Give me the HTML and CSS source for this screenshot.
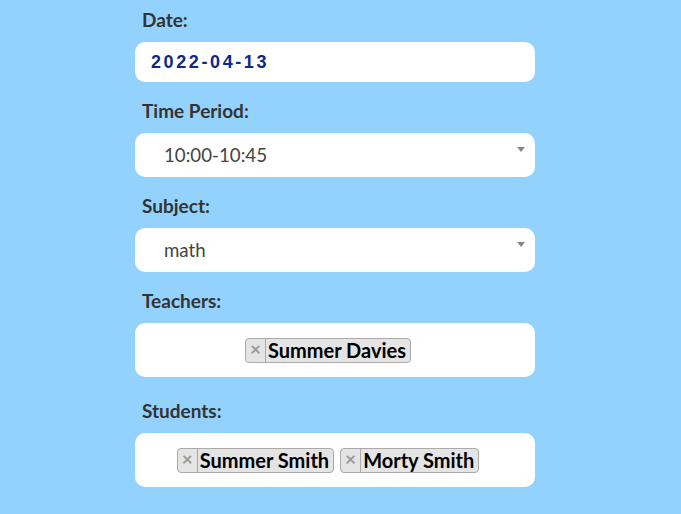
FILE: index.html
```html
<!DOCTYPE html>
<html>
<head>
<meta charset="utf-8">
<link rel="stylesheet" href="styles.css">
</head>
<body>
<form class="form">
  <div class="field first">
    <label class="label">Date:</label>
    <div class="box date">2022-04-13</div>
  </div>
  <div class="field">
    <label class="label">Time Period:</label>
    <div class="box select"><span class="value">10:00-10:45</span><span class="arrow"></span></div>
  </div>
  <div class="field">
    <label class="label">Subject:</label>
    <div class="box select"><span class="value">math</span><span class="arrow"></span></div>
  </div>
  <div class="field">
    <label class="label">Teachers:</label>
    <div class="box multi">
      <span class="tag"><span class="x">×</span><span class="name">Summer Davies</span></span>
    </div>
  </div>
  <div class="field students">
    <label class="label">Students:</label>
    <div class="box multi">
      <span class="tag"><span class="x">×</span><span class="name">Summer Smith</span></span>
      <span class="tag"><span class="x">×</span><span class="name">Morty Smith</span></span>
    </div>
  </div>
</form>
</body>
</html>
```
FILE: styles.css
```css
html, body {
  margin: 0;
  padding: 0;
  background: #93d2fd;
  font-family: Lato, "Open Sans", sans-serif;
}
.form {
  width: 400px;
  margin: 0 0 0 135px;
  padding-top: 9px;
  display: flex;
  flex-direction: column;
}
.field {
  display: flex;
  flex-direction: column;
  padding-top: 18px;
}
.field.first { padding-top: 0; }
.field.students { padding-top: 23px; }
.label {
  display: block;
  padding-left: 7px;
  font-weight: bold;
  font-size: 19px;
  line-height: 22px;
  color: #333;
  margin-bottom: 11px;
}
.box {
  background: #fff;
  border-radius: 10px;
  box-sizing: border-box;
}
.date {
  height: 40px;
  padding-left: 16px;
  display: flex;
  align-items: center;
  font-family: "Liberation Sans", Arial, sans-serif;
  font-weight: bold;
  font-size: 18px;
  letter-spacing: 2.6px;
  color: #0c2889;
}
.select {
  height: 44px;
  padding-left: 29px;
  display: flex;
  align-items: center;
  position: relative;
}
.value {
  font-size: 18.7px;
  color: #444;
}
.arrow {
  position: absolute;
  right: 10px;
  top: 14px;
  width: 0;
  height: 0;
  border-style: solid;
  border-width: 5px 4px 0 4px;
  border-color: #888 transparent transparent transparent;
}
.multi {
  height: 54px;
  padding-right: 14px;
  display: flex;
  align-items: center;
  justify-content: center;
  gap: 6px;
}
.tag {
  display: inline-flex;
  align-items: stretch;
  height: 25px;
  box-sizing: border-box;
  background: #e4e4e4;
  border: 1px solid #aaa;
  border-radius: 4px;
}
.x {
  display: flex;
  align-items: center;
  justify-content: center;
  width: 20px;
  color: #999;
  font-weight: bold;
  font-size: 19px;
  line-height: 1;
  padding-bottom: 3px;
  box-sizing: border-box;
  border-right: 1px solid #aaa;
}
.name {
  display: flex;
  align-items: center;
  padding: 0 4px 0 2px;
  font-weight: bold;
  font-size: 20px;
  color: #000;
}
```
